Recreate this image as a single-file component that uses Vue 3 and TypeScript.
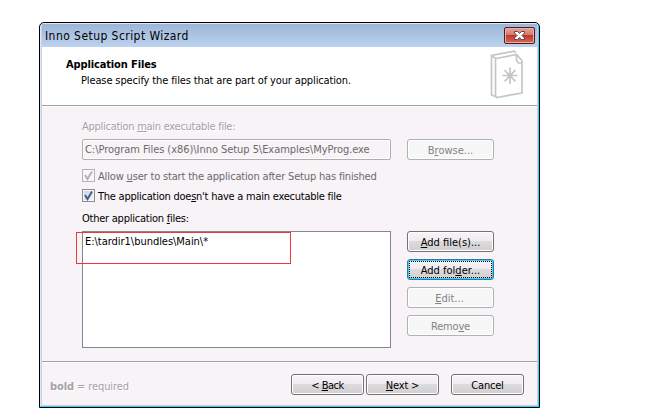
<script setup lang="ts">
interface Action { before: string; key: string; after: string; state: string }
const actions: Action[] = [
  { before: '', key: 'A', after: 'dd file(s)...', state: 'add-file' },
  { before: 'Add fol', key: 'd', after: 'er...', state: 'focused' },
  { before: '', key: 'E', after: 'dit...', state: 'disabled edit' },
  { before: 'Remo', key: 'v', after: 'e', state: 'disabled remove' },
]
</script>

<template>
  <main class="desktop">
    <section class="window">
      <div class="frame">
        <header class="titlebar">
          <span class="t title">Inno Setup Script Wizard</span>
          <button class="close" aria-label="Close">
            <svg width="13" height="11" viewBox="0 0 13 11"><path d="M1.500 1.500h3l2 2 2-2h3v1.500L9 5.500l2.500 2.500v1.500h-3l-2-2-2 2h-3V8L4 5.500 1.500 3z" fill="#fff" stroke="#5c4651" /></svg>
          </button>
        </header>
        <div class="heading">
          <div class="heading-text">
            <strong class="t h1">Application Files</strong>
            <span class="t sub">Please specify the files that are part of your application.</span>
          </div>
          <svg class="page-icon" width="34" height="50" viewBox="0 0 34 50" fill="none" stroke="#c6c6c6" stroke-width="1.700">
            <path d="M5 46.500L1.500 45V5.500L24 1.200 26 2.500M6 8.500L26.500 4.500 32 10.500v32.500L6.500 47.500l-1-1.500V8.500M26.500 4.500v6l2 2.500H32M1.500 6L6 8.500" />
            <path d="M20 17.500v16.500M12.500 25.500h15M14.500 20l11 11.500M25.500 20l-11 11.500" />
            <circle cx="20" cy="25.500" r="2.500" fill="#c6c6c6" stroke="none" />
          </svg>
        </div>
        <div class="content">
          <div class="etched t exe-label">Application <u>m</u>ain executable file:</div>
          <div class="row">
            <div class="field"><span class="t path">C:\Program Files (x86)\Inno Setup 5\Examples\MyProg.exe</span></div>
            <button class="btn disabled"><span class="t browse">B<u>r</u>owse...</span></button>
          </div>
          <label class="check off"><i><svg width="11" height="11" viewBox="0 0 11 11"><path d="M2 5l2.500 4L9 1.500" /></svg></i><span class="t allow">Allow <u>u</u>ser to start the application after Setup has finished</span></label>
          <label class="check"><i><svg width="11" height="11" viewBox="0 0 11 11"><path d="M2 5l2.500 4L9 1.500" /></svg></i><span class="t nomain">The application doe<u>s</u>n't have a main executable file</span></label>
          <div class="t other">Other application <u>f</u>iles:</div>
          <div class="row files">
            <div class="list"><span class="t entry">E:\tardir1\bundles\Main\*</span><div class="mark"></div></div>
            <div class="actions">
              <button v-for="a in actions" :key="a.key" class="btn" :class="a.state"><span class="t">{{ a.before }}<u>{{ a.key }}</u>{{ a.after }}</span></button>
            </div>
          </div>
        </div>
        <footer class="footer">
          <span class="etched t legend"><b>bold</b> = required</span>
          <button class="btn nav back"><span class="t">&lt; <u>B</u>ack</span></button>
          <button class="btn nav next"><span class="t"><u>N</u>ext &gt;</span></button>
          <button class="btn nav cancel"><span class="t">Cancel</span></button>
        </footer>
      </div>
    </section>
  </main>
</template>

<style>
body { background: #fff; overflow: hidden; }
</style>

<style scoped>
* { box-sizing: border-box; }
.desktop { height: 414px; padding: 22px 0 0 39px; display: flex; font: 11px/14px "DejaVu Sans Condensed", "DejaVu Sans", sans-serif; font-stretch: condensed; color: #000; }
.t { white-space: nowrap; width: max-content; }
.window { width: 501px; height: 386px; flex: none; border: 1px solid #000; border-radius: 5px 5px 0 0; background: #dee7f7; overflow: hidden; padding: 1px; box-shadow: inset -1px -1px #31d3ff; }
.frame { height: 382px; border: 1px solid #c6cfe7; border-top: 0; display: flex; flex-direction: column; background: #f7f3f7; }
.titlebar { height: 23px; background: linear-gradient(#9cb6d6, #bdd3ef); display: flex; justify-content: space-between; padding: 3px 2px 0 3px; }
.title { font-size: 12px; line-height: 18px; letter-spacing: .44px; }
.close { width: 31px; height: 17px; padding: 0; border: 1px solid #52182a; border-radius: 2px; background: linear-gradient(#e7a294, #d67b6b 45%, #bd3829 50%, #d66b52); box-shadow: inset 0 0 0 1px #e7b2a5; display: flex; align-items: center; justify-content: center; }
.heading { height: 59px; background: #fff; border-bottom: 1px solid #a5a2a5; display: flex; justify-content: space-between; padding: 3px 13px 0 24px; }
.heading-text { display: flex; flex-direction: column; padding-top: 7px; }
.h1 { line-height: 16px; letter-spacing: -.13px; }
.sub { margin-left: 15px; line-height: 16px; letter-spacing: -.13px; }
.content { height: 255px; padding: 13px 43px 0 40px; border-top: 1px solid #fff; }
.row { display: flex; justify-content: space-between; }
.etched { color: #a5a2a5; text-shadow: 1px 1px #fff; }
u { text-underline-offset: 1px; text-decoration-thickness: 1px; }
.field { width: 309px; height: 21px; border: 1px solid #adaead; border-radius: 2px; padding: 3px 2px 0; color: #6b696b; box-shadow: inset 0 0 0 1px #fff; }
.path { display: block; letter-spacing: -.05px; }
.exe-label { margin-bottom: 5px; letter-spacing: -.27px; }
.btn { width: 87px; height: 21px; border: 1px solid #737173; border-radius: 3px; padding: 2px 0 0; font: inherit; color: #000; background: linear-gradient(#f7f3f7, #efebef 45%, #dedbde 50%, #cecfce); box-shadow: inset 0 0 0 1px #fff; display: flex; align-items: center; justify-content: center; }
.disabled { border-color: #adb2b5; background: #f7f7f7; color: #848284; box-shadow: inset 0 0 0 1px #fff; }
.focused { border-color: #3179a5; box-shadow: inset 0 0 0 1px #39cfff; position: relative; }
.focused::after { content: ""; position: absolute; inset: 1px; border: 1px dotted #000; }
.edit { padding-right: 2px; }
.remove { letter-spacing: -.2px; }
.check { display: flex; gap: 3px; height: 13px; align-items: center; margin-top: 9px; }
.check + .check { margin-top: 7px; }
.check .t { padding-top: 2px; }
.check i { width: 13px; height: 13px; border: 1px solid #8c8e8c; background: linear-gradient(135deg, #cecfd6, #f7f7f7); box-shadow: inset 0 0 0 1px #f7f7f7; }
.check svg { display: block; fill: none; stroke: #425d9c; stroke-width: 2; }
.check.off { color: #6b696b; }
.check.off i { border-color: #b5b2b5; background: #f7f7f7; }
.check.off svg { stroke: #b5b2b5; }
.allow { letter-spacing: -.17px; }
.nomain { letter-spacing: -.24px; }
.other { margin-top: 10px; letter-spacing: -.24px; }
.files { margin-top: 5px; }
.list { width: 309px; height: 117px; background: #fff; border: 1px solid #848694; padding: 3px 2px 0; position: relative; }
.entry { display: block; letter-spacing: -.03px; }
.mark { position: absolute; left: -7px; top: 0; width: 215px; height: 32px; border: 1px solid #ef3839; }
.actions { display: flex; flex-direction: column; gap: 7px; }
.footer { height: 44px; border-top: 1px solid #a5a2a5; box-shadow: inset 0 1px #fff; display: flex; padding: 12px 13px 0 8px; }
.legend { margin-right: auto; padding-top: 6px; letter-spacing: -.1px; }
.nav { width: 73px; }
.back { letter-spacing: -.5px; }
.next { margin-left: 2px; letter-spacing: -.2px; }
.cancel { margin-left: 12px; letter-spacing: -.2px; }
</style>
